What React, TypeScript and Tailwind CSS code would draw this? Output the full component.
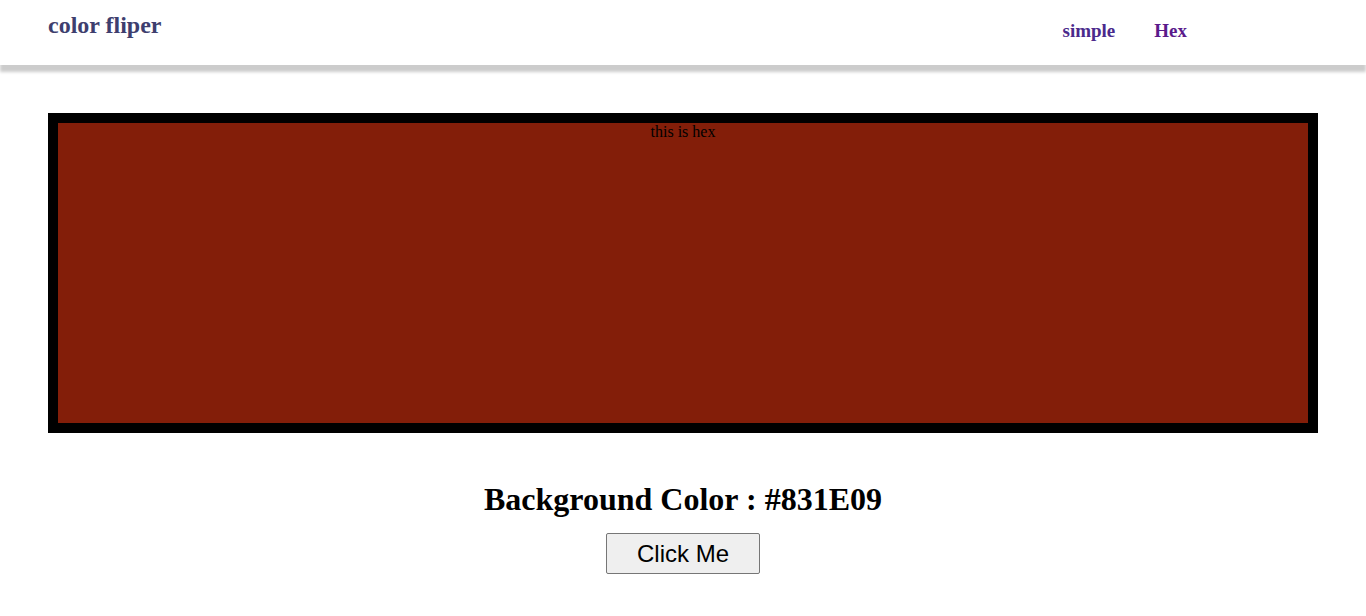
import { useState } from 'react';

const serif = { fontFamily: '"Liberation Serif", "Times New Roman", serif' };

export default function App() {
  const [color] = useState('#831E09');

  return (
    <div className="min-h-screen bg-white" style={serif}>
      <header className="h-[65px] bg-white shadow-[0_7px_3px_#cccccc] flex items-start justify-between px-12">
        <h1 className="mt-[11px] text-[24px] font-bold leading-[28px] text-[#3e3e6e]">
          color fliper
        </h1>
        <nav className="mt-[19px] mr-[131px] flex gap-[39px] text-[19px] font-bold leading-[24px]">
          <a href="#" className="text-[#4a2a8c]">simple</a>
          <a href="#" className="text-[#5a1a8b]">Hex</a>
        </nav>
      </header>

      <main className="px-12 pt-12">
        <div className="border-[10px] border-black h-[320px]" style={{ backgroundColor: color }}>
          <p className="text-center text-[16px] leading-[18px] text-black">this is hex</p>
        </div>

        <h2 className="mt-[48px] text-center text-[32px] font-bold leading-[37px] text-black">
          Background Color : {color}
        </h2>

        <div className="mt-[15px] flex justify-center">
          <button
            type="button"
            className="w-[154px] h-[41px] bg-[#efefef] border border-[#767676] rounded-[2px] text-[24px] text-black"
            style={{ fontFamily: '"Liberation Sans", Arial, sans-serif' }}
          >
            Click Me
          </button>
        </div>
      </main>
    </div>
  );
}
